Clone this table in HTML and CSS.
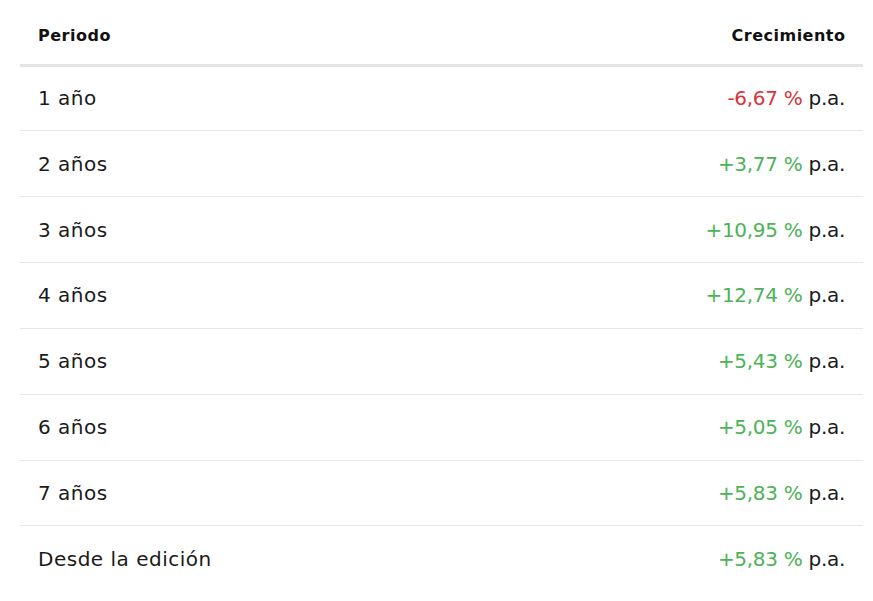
FILE: index.html
```html
<!DOCTYPE html>
<html lang="es">
<head>
<meta charset="utf-8">
<title>Crecimiento</title>
<link rel="stylesheet" href="styles.css">
</head>
<body>
<div class="wrap">
  <table class="growth">
    <thead>
      <tr><th class="period">Periodo</th><th class="value">Crecimiento</th></tr>
    </thead>
    <tbody>
      <tr><td class="period">1 año</td><td class="value"><span class="neg">-6,67 %</span> p.a.</td></tr>
      <tr><td class="period">2 años</td><td class="value"><span class="pos">+3,77 %</span> p.a.</td></tr>
      <tr><td class="period">3 años</td><td class="value"><span class="pos">+10,95 %</span> p.a.</td></tr>
      <tr><td class="period">4 años</td><td class="value"><span class="pos">+12,74 %</span> p.a.</td></tr>
      <tr><td class="period">5 años</td><td class="value"><span class="pos">+5,43 %</span> p.a.</td></tr>
      <tr><td class="period">6 años</td><td class="value"><span class="pos">+5,05 %</span> p.a.</td></tr>
      <tr><td class="period">7 años</td><td class="value"><span class="pos">+5,83 %</span> p.a.</td></tr>
      <tr class="last"><td class="period">Desde la edición</td><td class="value"><span class="pos">+5,83 %</span> p.a.</td></tr>
    </tbody>
  </table>
</div>
</body>
</html>
```

FILE: styles.css
```css
html, body {
  margin: 0;
  padding: 0;
  background: #ffffff;
}
body {
  font-family: "DejaVu Sans", "Noto Sans", sans-serif;
  color: #1a1a1a;
}
.wrap {
  padding: 0 10px 0 20px;
}
.growth {
  width: 100%;
  border-collapse: collapse;
}
.growth th {
  font-size: 16px;
  letter-spacing: 0.5px;
  font-weight: 700;
  color: #111111;
  height: 65px;
  padding: 8px 18px 0 18px;
  box-sizing: border-box;
  border-bottom: 3px solid #e4e4e4;
  vertical-align: middle;
}
.growth td {
  font-size: 20px;
  letter-spacing: 0.5px;
  font-weight: 400;
  height: 65.85px;
  padding: 0 18px;
  box-sizing: border-box;
  border-bottom: 1px solid #e6e6e6;
  vertical-align: middle;
}
.growth tr.last td {
  border-bottom: none;
}
.period {
  text-align: left;
}
.value {
  text-align: right;
}
.growth th.value {
  padding-right: 17.5px;
}
.growth td.value {
  padding-right: 18px;
  letter-spacing: -0.3px;
}
.neg {
  color: #d9343d;
}
.pos {
  color: #4cb356;
}
```
